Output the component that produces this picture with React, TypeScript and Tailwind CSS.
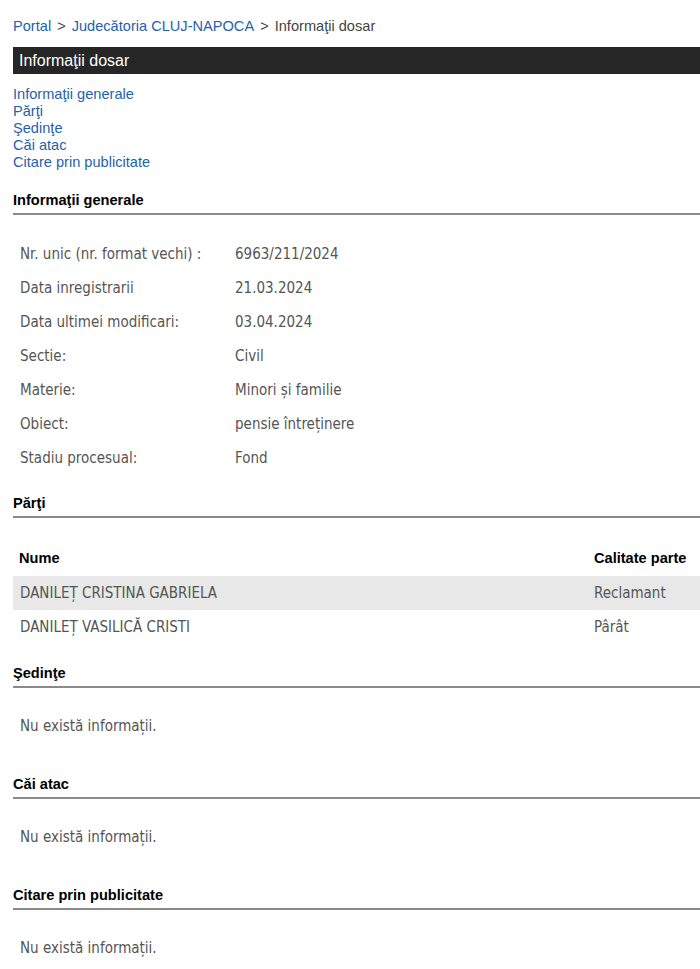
import React from "react";

const arial = { fontFamily: "'Liberation Sans', Arial, sans-serif" };

const generalInfo: [string, string][] = [
  ["Nr. unic (nr. format vechi) :", "6963/211/2024"],
  ["Data inregistrarii", "21.03.2024"],
  ["Data ultimei modificari:", "03.04.2024"],
  ["Sectie:", "Civil"],
  ["Materie:", "Minori și familie"],
  ["Obiect:", "pensie întreținere"],
  ["Stadiu procesual:", "Fond"],
];

const parti: [string, string][] = [
  ["DANILEȚ CRISTINA GABRIELA", "Reclamant"],
  ["DANILEȚ VASILICĂ CRISTI", "Pârât"],
];

function SectionTitle({ children }: { children: React.ReactNode }) {
  return (
    <h2 className="text-[14.6px] font-bold text-black leading-[17px] pb-[4px] border-b-2 border-[#8a8a8a]">
      {children}
    </h2>
  );
}

function Empty() {
  return (
    <p className="font-['DejaVu_Sans_Condensed',Tahoma,sans-serif] text-[15px] text-[#555] pl-[7px] pt-[30px] pb-[41px] leading-[17px]">
      Nu există informații.
    </p>
  );
}

export default function App() {
  return (
    <div className="min-h-screen bg-white pl-[13px] pt-[18px]" style={arial}>
      <nav className="text-[14.6px] leading-[17px] text-[#444]">
        <a className="text-[#1f5fb0]">Portal</a>
        <span className="mx-[6px]">&gt;</span>
        <a className="text-[#1f5fb0]">Judecătoria CLUJ-NAPOCA</a>
        <span className="mx-[6px]">&gt;</span>
        <span>Informaţii dosar</span>
      </nav>

      <div className="mt-[12px] h-[27px] bg-[#262626] text-white text-[16px] leading-[27px] pl-[6px]">
        Informaţii dosar
      </div>

      <ul className="mt-[12px] text-[14.6px] leading-[17px] text-[#1f5fb0]">
        <li>Informaţii generale</li>
        <li>Părţi</li>
        <li>Şedinţe</li>
        <li>Căi atac</li>
        <li>Citare prin publicitate</li>
      </ul>

      <section className="mt-[21px]">
        <SectionTitle>Informaţii generale</SectionTitle>
        <div className="font-['DejaVu_Sans_Condensed',Tahoma,sans-serif] text-[15px] text-[#555] pt-[22px] pb-[20px]">
          {generalInfo.map(([k, v]) => (
            <div key={k} className="flex h-[34px] items-center pl-[7px]">
              <span className="w-[215px]">{k}</span>
              <span>{v}</span>
            </div>
          ))}
        </div>
      </section>

      <section>
        <SectionTitle>Părţi</SectionTitle>
        <div className="pt-[24px] pb-[21px] font-['DejaVu_Sans_Condensed',Tahoma,sans-serif] text-[15px]">
          <div className="flex h-[34px] items-center pl-[6px] font-bold text-black text-[14.6px]" style={arial}>
            <span className="flex-1">Nume</span>
            <span className="w-[106px]">Calitate parte</span>
          </div>
          {parti.map(([n, c], i) => (
            <div
              key={n}
              className={`flex h-[34px] items-center pl-[7px] text-[#555] ${i === 0 ? "bg-[#e8e8e8]" : ""}`}
            >
              <span className="flex-1">{n}</span>
              <span className="w-[106px]">{c}</span>
            </div>
          ))}
        </div>
      </section>

      <section>
        <SectionTitle>Şedinţe</SectionTitle>
        <Empty />
      </section>
      <section>
        <SectionTitle>Căi atac</SectionTitle>
        <Empty />
      </section>
      <section>
        <SectionTitle>Citare prin publicitate</SectionTitle>
        <Empty />
      </section>
    </div>
  );
}
